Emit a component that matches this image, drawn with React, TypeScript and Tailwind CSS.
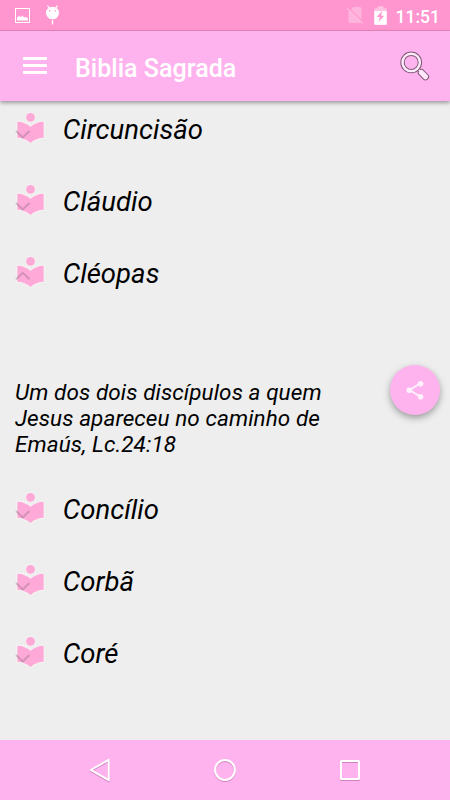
import React from "react";

function Reader({ open }: { open?: boolean }) {
  return (
    <svg className="-mt-px h-[35px] w-[35px] shrink-0 overflow-visible" viewBox="0 0 24 24">
      <g fill="#ffa9d8" stroke="#f3f1f2" strokeWidth="1.6" paintOrder="stroke">
        <path d="M12 11.55C9.64 9.35 6.48 8 3 8v11c3.48 0 6.64 1.35 9 3.55 2.36-2.19 5.52-3.55 9-3.55V8c-3.48 0-6.64 1.35-9 3.55z" />
        <circle cx="12" cy="5" r="3" />
      </g>
      <path
        d={open ? "M2.1 17.3l4.6-4.4 4.6 4.4" : "M2.1 14.4l4.6 4.4 4.6-4.4"}
        fill="none"
        stroke="#8c7083"
        strokeOpacity=".4"
        strokeWidth="1.4"
      />
    </svg>
  );
}

function Row({ label, open }: { label: string; open?: boolean }) {
  return (
    <div className="flex h-[72px] items-center pl-[13.4px]">
      <Reader open={open} />
      <span className="ml-[14.4px] pt-[3px] text-[27.5px] leading-8 tracking-[0.03px] italic">{label}</span>
    </div>
  );
}

export default function App() {
  return (
    <div className="relative flex h-[800px] w-[450px] flex-col overflow-hidden bg-[#eeeeee] font-[Roboto,sans-serif] text-black">
      <div className="flex h-[31px] shrink-0 items-center border-b border-[#e888be] bg-[#ff96cf] text-white">
        <svg className="ml-[15px] h-[15px] w-[15px]" viewBox="0 0 15 15">
          <rect x=".5" y=".5" width="14" height="14" fill="none" stroke="#fff" />
          <path d="M2 12.5V9.5l2-1.5 2 1 1.5-1.5L9 9.5l2-.5 2 1.5v2z" fill="#fff" />
        </svg>
        <svg className="ml-[15px] h-[20px] w-[15px]" viewBox="0 0 15 20">
          <path d="M2.5.5l2 3M12.5.5l-2 3M7.5 15v4.5" stroke="#fff" strokeWidth="1.3" />
          <ellipse cx="7.5" cy="8" rx="6.5" ry="6.3" fill="#fff" />
          <path d="M4.6 5.1v1.3M10.2 5.1v1.3" stroke="#ff96cf" strokeWidth="1.2" />
        </svg>
        <svg className="ml-auto h-[18px] w-[17px]" viewBox="0 0 17 18">
          <path d="M6.5 1H13a1.5 1.5 0 0 1 1.5 1.5V16a1 1 0 0 1-1 1h-11a1 1 0 0 1-1-1V6z" fill="#ffb4dd" />
          <path d="M1.2 2L16.5 16.2" stroke="#ff96cf" strokeWidth="1.3" />
          <path d="M.3 2.7L15.7 17.2" stroke="#ffb9df" strokeWidth="1.3" />
        </svg>
        <svg className="mr-[9px] ml-[10px] h-[19px] w-[13px]" viewBox="0 0 13 19">
          <path d="M3.5.3h6v2H12a.7.7 0 0 1 .7.7v15a.8.8 0 0 1-.7.7H1a.8.8 0 0 1-.7-.7V3A.7.7 0 0 1 1 2.3h2.5z" fill="#ffc1e2" />
          <path d="M.3 5h12.4v13a.8.8 0 0 1-.7.7H1a.8.8 0 0 1-.7-.7z" fill="#fff" />
          <path d="M8.3 4.8L2.8 11h3.1l-1.4 5L10.2 9.8H7.1z" fill="#ff96cf" />
        </svg>
        <span className="mr-[10px] pt-[3px] text-[17.5px] leading-5 font-medium">11:51</span>
      </div>
      <div className="z-10 flex h-[70px] shrink-0 items-center bg-[#ffb3ee] text-white shadow-[0_2px_4px_rgba(0,0,0,0.35)]">
        <div className="-mt-px ml-[23px] flex w-6 flex-col gap-1">
          <div className="h-[3px] bg-white" />
          <div className="h-[3px] bg-white" />
          <div className="h-[3px] bg-white" />
        </div>
        <h1 className="ml-[28px] pt-[5px] text-[25px] leading-8 font-medium tracking-[0.03px]">Biblia Sagrada</h1>
        <svg className="mr-[20px] ml-auto h-[30px] w-[30px]" viewBox="0 0 30 30" fill="none">
          <path d="M18 18l2.7 2.7" stroke="#805a78" strokeWidth="3.4" />
          <path d="M21.3 21.5l4.2 4.2" stroke="#805a78" strokeWidth="7.2" strokeLinecap="round" />
          <path d="M17 17l3.5 3.5" stroke="#ffe9fb" strokeWidth="1.6" />
          <path d="M21.3 21.5l4.2 4.2" stroke="#ffe6fa" strokeWidth="5.2" strokeLinecap="round" />
          <circle cx="11.2" cy="11.4" r="8.7" stroke="#805a78" strokeWidth="4.4" />
          <circle cx="11.2" cy="11.4" r="8.7" stroke="#ffeafb" strokeWidth="2.4" />
        </svg>
      </div>
      <main className="-mt-[9px] grow">
        <Row label="Circuncisão" />
        <Row label="Cláudio" />
        <Row label="Cléopas" open />
        <p className="mt-[71px] mb-[15px] pl-[15px] text-[22.5px] leading-[26px] tracking-[0.08px] italic">
          Um dos dois discípulos a quem
          <br />
          Jesus apareceu no caminho de
          <br />
          Emaús, Lc.24:18
        </p>
        <Row label="Concílio" />
        <Row label="Corbã" />
        <Row label="Coré" />
      </main>
      <button className="absolute top-[365px] left-[390px] flex h-[50px] w-[50px] items-center justify-center rounded-full bg-[#ffb3ee] shadow-[0_3px_7px_rgba(0,0,0,0.35)]">
        <svg className="h-5 w-5" viewBox="0 0 20 20" fill="#fff1fc">
          <path d="M15 3.5L4.5 10 15 16.5" fill="none" stroke="#fff1fc" strokeWidth="1.9" />
          <circle cx="15.6" cy="3.7" r="2.8" />
          <circle cx="4.3" cy="10.2" r="2.8" />
          <circle cx="15.6" cy="16.7" r="2.8" />
        </svg>
      </button>
      <nav className="flex h-[60px] shrink-0 items-center justify-center gap-[101px] bg-[#ffb3ee]">
        <svg className="h-6 w-6 drop-shadow-[0_1px_0.5px_rgba(120,40,100,0.35)]" viewBox="0 0 24 24" fill="none" stroke="#fff" strokeWidth="2">
          <path d="M20.7 1.8v20.4L2.8 12z" strokeLinejoin="round" />
        </svg>
        <svg className="h-6 w-6 drop-shadow-[0_1px_0.5px_rgba(120,40,100,0.35)]" viewBox="0 0 24 24" fill="none" stroke="#fff" strokeWidth="2">
          <circle cx="12" cy="12" r="9.9" />
        </svg>
        <svg className="h-6 w-6 drop-shadow-[0_1px_0.5px_rgba(120,40,100,0.35)]" viewBox="0 0 24 24" fill="none" stroke="#fff" strokeWidth="2">
          <rect x="3" y="3" width="18" height="18" rx=".6" />
        </svg>
      </nav>
    </div>
  );
}
